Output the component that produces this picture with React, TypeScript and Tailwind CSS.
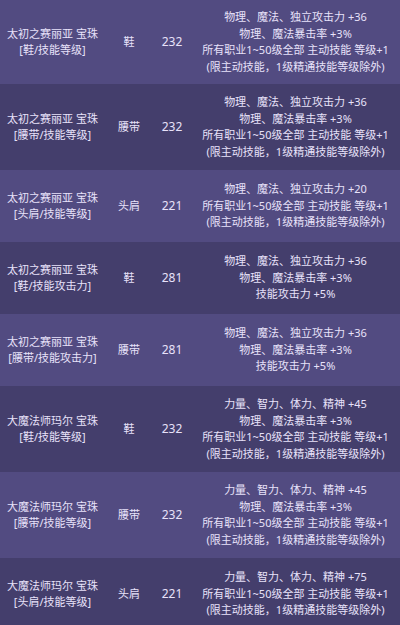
import React from 'react';

type Row = {
  name: string;
  sub: string;
  slot: string;
  price: string;
  effects: string[];
  h: string;
};

const LV = '所有职业1~50级全部 主动技能 等级+1';
const LIMIT = '(限主动技能，1级精通技能等级除外)';

const rows: Row[] = [
  { name: '太初之赛丽亚 宝珠', sub: '[鞋/技能等级]', slot: '鞋', price: '232', h: 'h-[84px]',
    effects: ['物理、魔法、独立攻击力 +36', '物理、魔法暴击率 +3%', LV, LIMIT] },
  { name: '太初之赛丽亚 宝珠', sub: '[腰带/技能等级]', slot: '腰带', price: '232', h: 'h-[86px]',
    effects: ['物理、魔法、独立攻击力 +36', '物理、魔法暴击率 +3%', LV, LIMIT] },
  { name: '太初之赛丽亚 宝珠', sub: '[头肩/技能等级]', slot: '头肩', price: '221', h: 'h-[72px]',
    effects: ['物理、魔法、独立攻击力 +20', LV, LIMIT] },
  { name: '太初之赛丽亚 宝珠', sub: '[鞋/技能攻击力]', slot: '鞋', price: '281', h: 'h-[72px]',
    effects: ['物理、魔法、独立攻击力 +36', '物理、魔法暴击率 +3%', '技能攻击力 +5%'] },
  { name: '太初之赛丽亚 宝珠', sub: '[腰带/技能攻击力]', slot: '腰带', price: '281', h: 'h-[72px]',
    effects: ['物理、魔法、独立攻击力 +36', '物理、魔法暴击率 +3%', '技能攻击力 +5%'] },
  { name: '大魔法师玛尔 宝珠', sub: '[鞋/技能等级]', slot: '鞋', price: '232', h: 'h-[86px]',
    effects: ['力量、智力、体力、精神 +45', '物理、魔法暴击率 +3%', LV, LIMIT] },
  { name: '大魔法师玛尔 宝珠', sub: '[腰带/技能等级]', slot: '腰带', price: '232', h: 'h-[86px]',
    effects: ['力量、智力、体力、精神 +45', '物理、魔法暴击率 +3%', LV, LIMIT] },
  { name: '大魔法师玛尔 宝珠', sub: '[头肩/技能等级]', slot: '头肩', price: '221', h: 'h-[72px]',
    effects: ['力量、智力、体力、精神 +75', LV, LIMIT] },
];

export default function App() {
  return (
    <div
      className="w-[400px] h-[625px] overflow-hidden bg-[#443e6c] text-[#e8e2fa] text-[11px] leading-[16.5px]"
      style={{ fontFamily: '"Noto Sans", "Noto Sans CJK SC", sans-serif' }}
    >
      {rows.map((r, i) => (
        <div
          key={i}
          className={`grid grid-cols-[105px_48px_38px_1fr] items-center text-center ${r.h} ${
            i % 2 === 0 ? 'bg-[#524b81]' : 'bg-[#443e6c]'
          }`}
        >
          <div className="whitespace-nowrap">
            <p>{r.name}</p>
            <p>{r.sub}</p>
          </div>
          <div>{r.slot}</div>
          <div className="text-[12px]">{r.price}</div>
          <div className="whitespace-nowrap">
            {r.effects.map((e, j) => (
              <p key={j}>{e}</p>
            ))}
          </div>
        </div>
      ))}
    </div>
  );
}
